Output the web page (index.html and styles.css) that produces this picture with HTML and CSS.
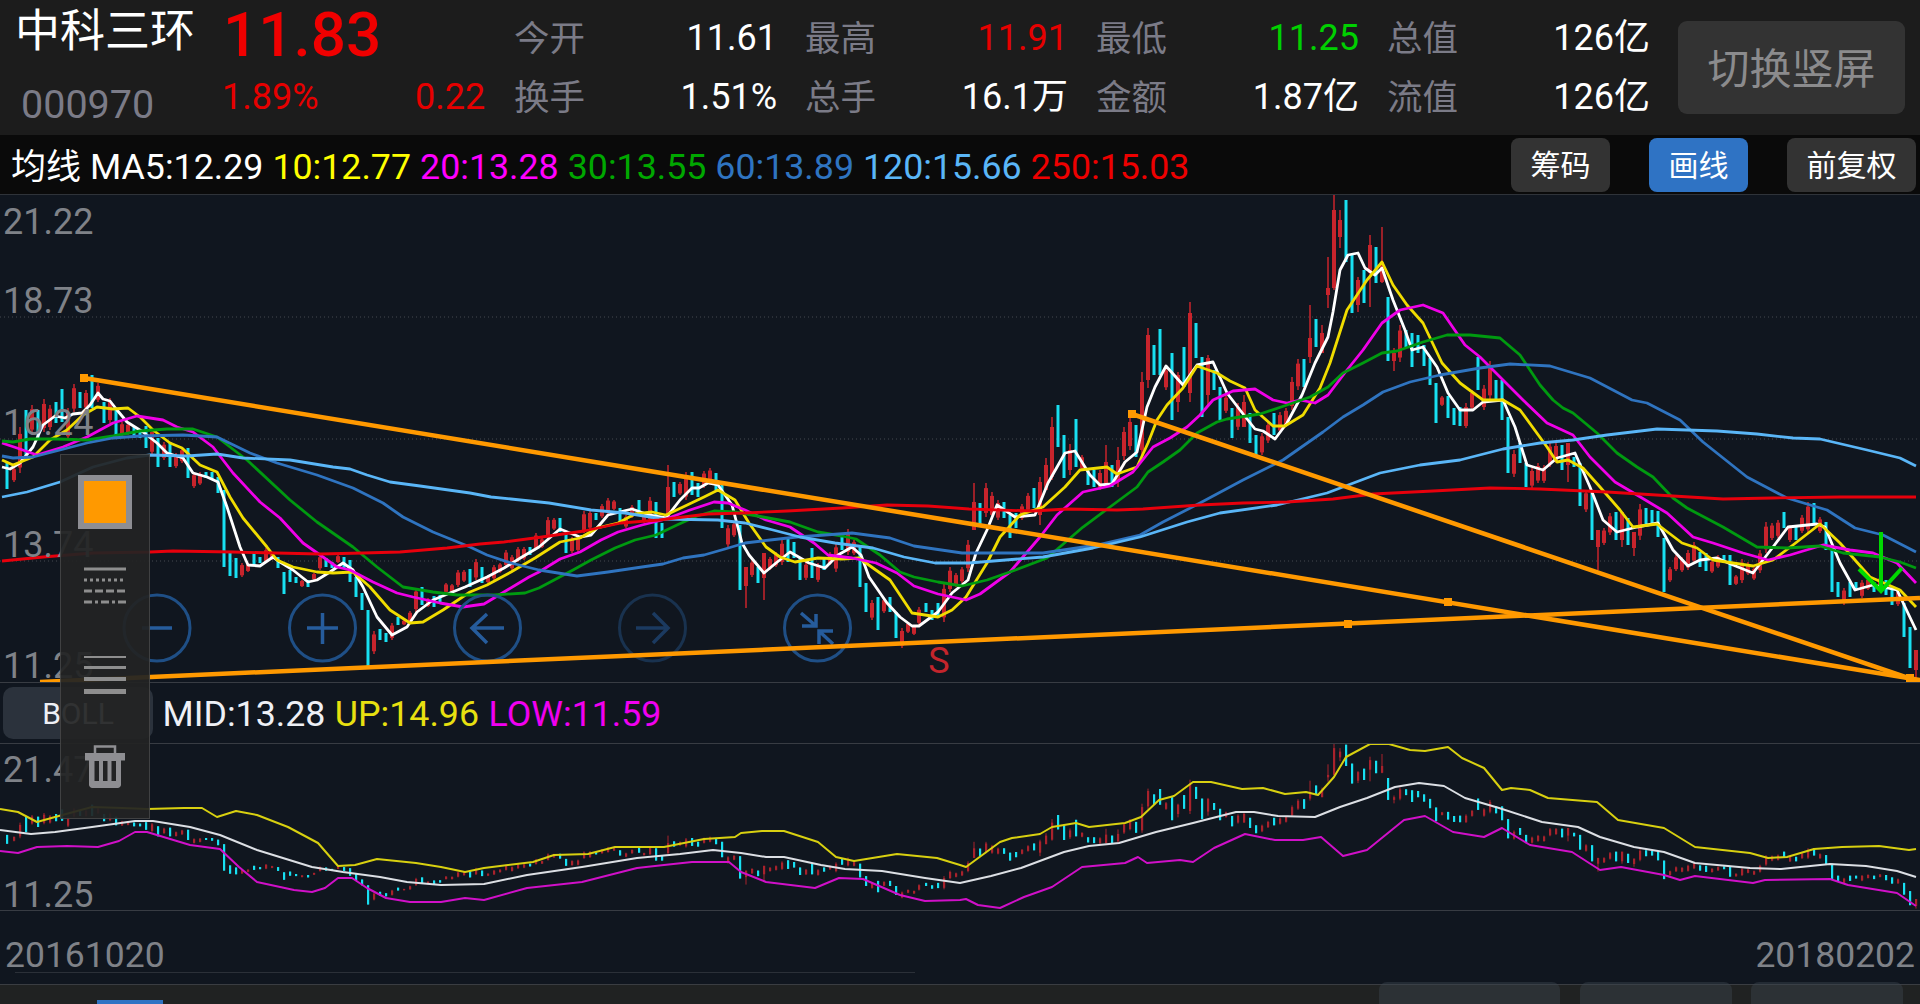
FILE: index.html
```html
<!DOCTYPE html>
<html lang="zh">
<head>
<meta charset="utf-8">
<title>中科三环 000970</title>
<link rel="stylesheet" href="styles.css">
</head>
<body>
<div class="app">
  <header class="quote">
    <div class="ident">
      <div class="ident-top">
        <span class="name">中科三环</span>
        <span class="price">11.83</span>
      </div>
      <div class="ident-bottom">
        <span class="code">000970</span>
        <span class="pct up">1.89%</span>
        <span class="chg up">0.22</span>
      </div>
    </div>
    <div class="stats">
      <div class="stat"><span class="lab">今开</span><span class="val">11.61</span></div>
      <div class="stat"><span class="lab">最高</span><span class="val up">11.91</span></div>
      <div class="stat"><span class="lab">最低</span><span class="val down">11.25</span></div>
      <div class="stat"><span class="lab">总值</span><span class="val">126亿</span></div>
      <div class="stat"><span class="lab">换手</span><span class="val">1.51%</span></div>
      <div class="stat"><span class="lab">总手</span><span class="val">16.1万</span></div>
      <div class="stat"><span class="lab">金额</span><span class="val">1.87亿</span></div>
      <div class="stat"><span class="lab">流值</span><span class="val">126亿</span></div>
    </div>
    <button class="switch">切换竖屏</button>
  </header>

  <div class="ma-row">
    <span class="ma-title">均线</span>
    <span class="ma c-white">MA5:12.29</span>
    <span class="ma c-yellow">10:12.77</span>
    <span class="ma c-magenta">20:13.28</span>
    <span class="ma c-green">30:13.55</span>
    <span class="ma c-blue">60:13.89</span>
    <span class="ma c-sky">120:15.66</span>
    <span class="ma c-red">250:15.03</span>
    <div class="ma-actions">
      <button class="chip chip-a">筹码</button>
      <button class="chip chip-b is-on">画线</button>
      <button class="chip chip-c">前复权</button>
    </div>
  </div>

  <svg class="chart chart-main" viewBox="0 195 1920 487" width="1920" height="487">
    <defs><clipPath id="mainClip"><rect x="0" y="195" width="1920" height="487"/></clipPath></defs>
    <g class="grid">
      <line x1="0" y1="317" x2="1920" y2="317"/>
      <line x1="0" y1="439" x2="1920" y2="439"/>
      <line x1="0" y1="561" x2="1920" y2="561"/>
    </g>
    <g id="mainCandles"></g>
    <g id="mainLines"></g>
    <g class="axis">
      <text x="3" y="234">21.22</text>
      <text x="3" y="313">18.73</text>
      <text x="3" y="435">16.24</text>
      <text x="3" y="557">13.74</text>
      <text x="3" y="678">11.25</text>
    </g>
    <g class="zoom">
      <circle cx="157" cy="628" r="33"/><path d="M142 628H172"/>
      <circle cx="322.500" cy="628" r="33"/><path d="M307 628H338M322.500 613V644"/>
      <circle cx="487.500" cy="628" r="33"/><path d="M472 628H504M487 614L472 628L487 643"/>
      <g class="zoom-off"><circle cx="652.500" cy="628" r="33"/><path d="M636 628H668M653 613L668 628L653 643"/></g>
      <circle cx="817.500" cy="628" r="33"/><path d="M801 613L816 626M802 626H816V614M833 644L819 631M833 631H819V644"/>
    </g>
    <text class="mark-s" x="939" y="673">S</text>
    <g class="draw" clip-path="url(#mainClip)">
      <line x1="84" y1="378" x2="1920" y2="680"/>
      <line x1="1132" y1="414" x2="1920" y2="682"/>
      <line x1="40" y1="682" x2="1920" y2="598"/>
      <rect x="80" y="374" width="8" height="8"/>
      <rect x="1128" y="410" width="8" height="8"/>
      <rect x="1444" y="598" width="8" height="8"/>
      <rect x="1344" y="620" width="8" height="8"/>
      <rect x="1906" y="674" width="8" height="8"/>
    </g>
    <path class="sell" d="M1881 532V591M1859 569L1881 591L1902 568"/>
  </svg>

  <div class="boll-row">
    <button class="boll">BOLL</button>
    <span class="ma c-mid">MID:13.28</span>
    <span class="ma c-up">UP:14.96</span>
    <span class="ma c-low">LOW:11.59</span>
  </div>

  <svg class="chart chart-sub" viewBox="0 744 1920 166" width="1920" height="166">
    <g id="subCandles"></g>
    <g id="subLines"></g>
    <g class="axis">
      <text x="3" y="782">21.47</text>
      <text x="3" y="907">11.25</text>
    </g>
  </svg>

  <div class="dates"><span>20161020</span><span>20180202</span></div>
  <div class="rule"></div>

  <footer class="footer">
    <span class="footer-tab"></span>
    <div class="peek">
      <span class="peek-tab peek-a"></span>
      <span class="peek-tab peek-b"></span>
      <span class="peek-tab peek-c"></span>
    </div>
  </footer>

  <aside class="tools">
    <span class="swatch"></span>
    <svg class="tool-styles" width="42" height="37" viewBox="0 0 42 37">
      <path class="t1" d="M0 2H42"/>
      <path class="t2" d="M0 13H42"/>
      <path class="t3" d="M0 24H42"/>
      <path class="t4" d="M0 35H42"/>
    </svg>
    <svg class="tool-widths" width="42" height="40" viewBox="0 0 42 40">
      <rect y="1" width="42" height="2"/>
      <rect y="11" width="42" height="3"/>
      <rect y="22" width="42" height="4"/>
      <rect y="34" width="42" height="5"/>
    </svg>
    <svg class="tool-trash" width="40" height="43" viewBox="0 0 40 43">
      <path class="trash-handle" d="M10 8V1.500H30V8"/>
      <rect class="trash-body" x="0" y="8" width="40" height="7.500"/>
      <path class="trash-body" d="M4 15H36V39A3.500 3.500 0 0 1 32.500 43H7.500A3.500 3.500 0 0 1 4 39Z"/>
      <rect class="trash-slot" x="9.500" y="16" width="4.500" height="20"/>
      <rect class="trash-slot" x="18" y="16" width="4.500" height="20"/>
      <rect class="trash-slot" x="26.500" y="16" width="4.500" height="20"/>
    </svg>
  </aside>
</div>
<script src="chart.js"></script>
</body>
</html>
```

FILE: styles.css
```css
* { box-sizing: border-box; }
html, body { margin: 0; padding: 0; background: #10161f; }
body { font-family: Roboto, "Noto Sans CJK SC", sans-serif; color: #fff; }
button { font: inherit; border: 0; padding: 0; margin: 0; }

.app { position: relative; width: 1920px; height: 1004px; overflow: hidden; background: #10161f; }

.up { color: #e60000; }
.down { color: #00d000; }

/* quote header */
.quote { display: flex; height: 135px; background: #1c1c1c; }
.ident { width: 514px; flex: none; }
.ident-top { display: flex; align-items: center; height: 67px; padding-left: 15px; }
.name { width: 208px; font-size: 45px; line-height: 60px; margin-top: -4px; }
.price { font-size: 62px; font-weight: 500; line-height: 64px; color: #f00000; margin-top: 2px; }
.ident-bottom { display: flex; align-items: center; height: 60px; padding-left: 21px; }
.code { width: 201px; font-size: 39.500px; color: #7b7b87; margin-top: 14px; }
.pct { width: 193px; font-size: 36px; }
.chg { width: 69px; font-size: 36px; text-align: right; }

.stats { display: grid; grid-template-columns: repeat(4, 291px); grid-auto-rows: 59px; padding-top: 8px; flex: none; }
.stat { display: flex; justify-content: space-between; align-items: center; padding-right: 28px; }
.lab { font-size: 35.500px; color: #7b7b87; margin-top: -4px; }
.val { font-size: 36px; line-height: 40px; }
.val:not(.up):not(.down) { color: #fff; }

.switch { width: 227px; height: 93px; margin-top: 21px; padding-bottom: 4px; flex: none; border-radius: 9px; background: #333; color: #8b8b8d; font-size: 42px; }

/* MA row */
.ma-row { display: flex; align-items: center; gap: 9px; height: 60px; padding: 0 4px 0 11px; background: #0a0a0a; border-bottom: 1px solid #2f3339; }
.ma-title { font-size: 35px; margin-top: -3px; color: #fff; white-space: nowrap; }
.ma { font-size: 35.750px; margin-top: 4px; white-space: nowrap; }
.c-white { color: #fff; }
.c-yellow { color: #ffff00; }
.c-magenta { color: #ff00ff; }
.c-green { color: #00a800; }
.c-blue { color: #2f74c0; }
.c-sky { color: #5ab6f7; }
.c-red { color: #ee0000; }
.c-mid { color: #eef0f6; }
.c-up { color: #e8e010; }
.c-low { color: #f000f0; }

.ma-actions { display: flex; gap: 39px; margin-left: auto; }
.chip { height: 54px; padding-bottom: 4px; border-radius: 8px; background: #333; color: #fff; font-size: 30px; }
.chip-a, .chip-b { width: 99px; }
.chip-c { width: 129px; }
.chip.is-on { background: #2f73c4; }

/* charts */
.chart { display: block; box-sizing: content-box; background: #10161f; border-bottom: 1px solid #383c43; }
.grid line { stroke: rgba(255,255,255,.22); stroke-width: 1; stroke-dasharray: 1 3; }
.axis text { font-size: 36px; fill: #7f8288; }
.zoom circle { fill: none; stroke: #1f4f86; stroke-width: 3; }
.zoom path { fill: none; stroke: #265c9c; stroke-width: 3.500; }
.zoom-off circle { stroke: #19324f; }
.zoom-off path { stroke: #1b3a60; }
.mark-s { font-size: 36px; fill: #c4252c; text-anchor: middle; }
.draw line { stroke: #ff9900; stroke-width: 4.500; }
.draw rect { fill: #ff9900; }
.sell { fill: none; stroke: #00d800; stroke-width: 4; }
.ma-line { fill: none; stroke-width: 2.800; stroke-linejoin: round; }
.sub-line { fill: none; stroke-width: 2; stroke-linejoin: round; }
.wick-r { stroke: #c8242c; stroke-width: 1.500; }
.wick-c { stroke: #18e0f2; stroke-width: 1.500; }
.body-r { fill: #c8242c; }
.body-c { fill: #18e0f2; }
.sub-wick-r { stroke: #a8222c; stroke-width: 1; }
.sub-wick-c { stroke: #18e0f2; stroke-width: 1; }
.sub-body-r { fill: #a8222c; }
.sub-body-c { fill: #18e0f2; }

.boll-row { display: flex; align-items: center; gap: 9.500px; height: 61px; padding-left: 3px; background: #10161f; border-bottom: 1px solid #383c43; }
.boll-row .ma { margin-top: 2px; }
.boll { width: 150px; height: 52px; border-radius: 10px; background: #2b323c; color: #eef0f6; font-size: 30px; }

.dates { display: flex; justify-content: space-between; align-items: flex-end; height: 61px; padding: 0 5px; font-size: 35.500px; line-height: 40px; color: #7f8288; }
.dates span { margin-bottom: -3px; }
.rule { width: 900px; height: 1px; margin: 0 0 11px 15px; background: #2b3038; }

.footer { position: relative; display: flex; height: 20px; padding: 15px 0 0 97px; background: #202222; border-top: 1px solid #3a3d42; }
.footer-tab { width: 66px; height: 5px; background: #2f73c4; }
.peek { position: absolute; left: 1379px; top: -3px; display: flex; gap: 20px; height: 23px; }
.peek-tab { height: 23px; border-radius: 8px 8px 0 0; background: rgba(60,68,78,.45); }
.peek-a { width: 181px; }
.peek-b { width: 152px; margin-right: -1px; }
.peek-c { width: 152px; }

/* drawing tool palette */
.tools { position: absolute; left: 60px; top: 454px; width: 90px; height: 365px; display: flex; flex-direction: column; align-items: center; padding-top: 20px; background: rgba(34,35,36,.93); border: 1px solid rgba(255,255,255,.14); }
.swatch { width: 54px; height: 54px; border: 6px solid #8e8e93; background: #ff9900; flex: none; }
.tool-styles { margin-top: 38px; flex: none; }
.tool-widths { margin-top: 51px; flex: none; }
.tool-trash { margin-top: 50px; flex: none; }
.tool-styles path { fill: none; stroke: #8e8e8e; stroke-width: 3; }
.tool-styles .t2 { stroke-dasharray: 3 3; }
.tool-styles .t3 { stroke-dasharray: 8 3; }
.tool-styles .t4 { stroke-dasharray: 8 3 3 3; }
.tool-widths rect { fill: #8e8e8e; }
.trash-body { fill: #8e8e92; }
.trash-handle { fill: none; stroke: #8e8e92; stroke-width: 2.500; }
.trash-slot { fill: #222324; }
```

FILE: chart.js
```js
(function () {
  var NS = 'http://www.w3.org/2000/svg';

  var MA = {
    '#ffffff': [[2,467],[10,469],[20,463],[33,447],[43,425],[55,416],[65,418],[73,414],[82,413],[90,405],[98,393],[103,399],[110,401],[117,410],[127,422],[143,432],[157,443],[167,453],[183,458],[193,473],[207,477],[218,482],[227,507],[240,547],[248,565],[260,566],[273,557],[280,562],[293,570],[308,582],[317,580],[330,572],[343,563],[353,570],[363,587],[377,617],[392,635],[407,627],[417,612],[433,600],[450,593],[465,587],[487,577],[504,568],[522,557],[539,547],[560,529],[580,537],[591,535],[608,515],[632,509],[649,515],[666,518],[680,500],[692,488],[699,488],[708,483],[718,485],[732,505],[742,543],[749,555],[764,573],[776,563],[790,552],[809,563],[825,568],[838,555],[852,547],[861,555],[869,577],[887,603],[900,617],[912,626],[919,626],[938,612],[952,593],[968,580],[976,553],[987,530],[997,505],[1015,517],[1035,515],[1048,483],[1065,453],[1075,451],[1090,475],[1100,485],[1112,484],[1125,462],[1137,452],[1147,407],[1155,387],[1166,366],[1183,385],[1197,365],[1213,362],[1227,393],[1240,410],[1255,429],[1263,431],[1275,439],[1287,423],[1302,395],[1315,363],[1328,337],[1333,312],[1340,270],[1348,255],[1358,253],[1365,268],[1375,275],[1382,268],[1393,300],[1405,330],[1412,350],[1423,347],[1437,367],[1448,393],[1460,410],[1473,410],[1483,402],[1503,400],[1515,427],[1527,465],[1543,470],[1557,458],[1575,453],[1590,487],[1603,520],[1617,532],[1637,527],[1658,523],[1673,550],[1688,566],[1700,560],[1717,558],[1733,565],[1753,573],[1773,547],[1788,527],[1817,524],[1825,527],[1840,563],[1855,590],[1873,585],[1897,590],[1916,630]],
    '#f0dc00': [[2,460],[13,465],[33,457],[50,440],[67,430],[83,415],[97,407],[113,409],[128,408],[140,417],[153,430],[170,443],[182,448],[200,465],[217,472],[230,497],[243,518],[267,547],[277,560],[293,567],[317,572],[333,573],[353,572],[370,587],[390,610],[410,623],[423,622],[443,610],[470,592],[487,585],[511,572],[535,558],[560,542],[580,538],[597,528],[618,523],[635,514],[652,512],[666,515],[683,507],[704,497],[718,490],[735,500],[749,523],[766,547],[780,557],[795,562],[818,558],[842,559],[859,558],[873,568],[890,580],[912,613],[938,617],[952,610],[966,597],[987,563],[1000,537],[1020,515],[1043,507],[1065,487],[1080,470],[1107,467],[1117,474],[1137,467],[1148,443],[1157,420],[1167,405],[1183,388],[1197,366],[1217,373],[1230,381],[1245,388],[1255,410],[1273,426],[1285,426],[1303,415],[1320,388],[1330,363],[1347,310],[1367,280],[1382,262],[1393,285],[1407,305],[1423,323],[1442,363],[1460,383],[1483,400],[1503,400],[1520,410],[1547,447],[1557,462],[1568,460],[1583,468],[1600,487],[1620,510],[1633,527],[1657,524],[1682,543],[1697,548],[1713,560],[1733,563],[1753,566],[1773,560],[1793,545],[1820,524],[1840,543],[1870,577],[1900,590],[1916,607]],
    '#f000e8': [[2,443],[17,448],[37,455],[63,447],[87,437],[113,423],[137,416],[163,420],[177,427],[193,432],[213,447],[233,473],[260,502],[280,518],[303,543],[323,557],[337,567],[350,570],[373,582],[397,593],[413,597],[440,603],[463,607],[484,604],[504,592],[529,577],[539,572],[560,559],[580,552],[601,540],[618,532],[642,525],[666,519],[690,510],[714,502],[728,503],[745,510],[766,520],[790,527],[814,543],[828,555],[852,558],[876,563],[897,573],[914,586],[938,594],[966,600],[980,594],[1010,572],[1022,558],[1040,537],[1057,515],[1083,492],[1110,486],[1133,472],[1153,447],[1170,438],[1187,427],[1200,415],[1213,400],[1233,391],[1255,389],[1273,400],[1287,403],[1300,400],[1315,403],[1328,395],[1347,370],[1363,350],[1382,323],[1400,310],[1423,305],[1443,313],[1465,345],[1480,357],[1523,400],[1547,423],[1573,435],[1590,457],[1615,482],[1637,495],[1667,513],[1693,537],[1713,543],[1743,553],[1768,560],[1790,555],[1823,545],[1850,550],[1873,553],[1897,563],[1916,583]],
    '#009a10': [[2,441],[13,442],[30,439],[57,439],[87,440],[113,436],[140,431],[167,429],[193,429],[217,437],[247,460],[290,500],[317,522],[353,547],[377,567],[403,587],[433,592],[457,595],[494,595],[525,593],[539,588],[573,570],[591,560],[615,548],[635,540],[656,535],[677,525],[697,516],[714,511],[735,512],[763,517],[790,522],[818,532],[842,536],[856,539],[880,555],[900,572],[914,577],[938,582],[962,586],[987,580],[1010,572],[1047,558],[1083,527],[1110,507],[1137,487],[1148,472],[1163,462],[1180,450],[1197,433],[1217,422],[1227,419],[1240,417],[1260,414],[1287,405],[1310,397],[1328,387],[1343,373],[1363,363],[1382,353],[1397,351],[1423,342],[1447,335],[1470,335],[1500,338],[1520,355],[1540,385],[1553,400],[1563,408],[1573,413],[1597,433],[1617,453],[1637,467],[1653,477],[1673,498],[1687,508],[1723,527],[1757,547],[1787,548],[1820,546],[1843,553],[1880,557],[1900,562],[1916,568]],
    '#2f74c0': [[2,456],[13,458],[33,457],[60,450],[87,443],[113,438],[140,436],[183,435],[217,437],[250,453],[277,463],[317,475],[353,488],[383,503],[403,517],[433,532],[470,547],[487,555],[511,563],[539,570],[577,576],[608,572],[642,567],[663,564],[683,558],[704,555],[725,549],[745,543],[770,540],[797,537],[825,535],[852,533],[890,538],[914,546],[962,553],[1043,553],[1097,545],[1140,535],[1163,522],[1200,503],[1243,480],[1283,460],[1323,432],[1343,417],[1363,405],[1383,392],[1410,382],[1440,375],[1480,368],[1510,364],[1550,366],[1590,378],[1632,400],[1647,403],[1680,420],[1703,442],[1747,477],[1787,498],[1827,510],[1855,528],[1883,535],[1916,552]],
    '#5ab6f7': [[2,497],[27,492],[60,482],[93,467],[127,458],[150,455],[187,456],[217,454],[243,458],[290,460],[333,467],[350,469],[367,475],[390,482],[420,486],[470,493],[491,497],[511,499],[549,503],[591,510],[625,513],[663,519],[718,520],[745,523],[773,530],[800,537],[835,543],[873,548],[904,557],[935,563],[969,563],[1043,557],[1093,548],[1140,537],[1187,522],[1220,513],[1277,505],[1327,493],[1380,473],[1420,465],[1460,460],[1503,449],[1540,443],[1573,440],[1607,435],[1657,429],[1717,431],[1757,434],[1793,438],[1820,439],[1867,450],[1900,458],[1916,466]],
    '#e8000c': [[2,561],[43,557],[93,553],[150,552],[173,551],[233,552],[320,554],[363,553],[400,552],[447,548],[480,544],[504,542],[542,537],[584,531],[621,523],[659,520],[708,514],[745,513],[787,511],[842,508],[887,505],[928,506],[969,509],[1033,511],[1067,509],[1117,510],[1143,509],[1200,505],[1243,503],[1287,502],[1333,499],[1373,494],[1433,491],[1490,488],[1540,489],[1607,492],[1673,496],[1723,499],[1773,498],[1840,497],[1916,497]]
  };

  var BOLL = {
    '#dcdfe4': [[0,830],[31,834],[55,832],[92,827],[135,821],[153,821],[190,827],[220,835],[257,850],[312,867],[343,872],[380,877],[407,882],[441,885],[484,884],[527,875],[582,867],[637,858],[680,854],[713,850],[741,853],[766,857],[784,857],[821,865],[845,869],[882,871],[925,878],[960,883],[991,876],[1021,868],[1064,852],[1089,846],[1119,843],[1156,832],[1193,823],[1236,812],[1254,812],[1278,816],[1315,817],[1340,807],[1367,798],[1395,787],[1419,783],[1444,786],[1465,798],[1499,808],[1542,822],[1578,827],[1600,837],[1634,847],[1664,852],[1695,863],[1750,868],[1781,869],[1830,864],[1866,866],[1897,871],[1916,877]],
    '#d8d010': [[0,809],[18,812],[37,822],[55,817],[92,807],[122,808],[147,809],[184,808],[202,808],[217,817],[236,811],[257,815],[288,827],[318,843],[338,866],[355,865],[377,859],[416,863],[441,867],[465,872],[484,868],[533,862],[554,855],[588,854],[615,847],[664,847],[704,839],[735,837],[741,833],[762,831],[784,831],[818,842],[836,857],[854,861],[897,854],[937,858],[960,865],[966,867],[1000,842],[1012,838],[1040,834],[1052,827],[1076,823],[1089,827],[1125,823],[1141,817],[1159,800],[1174,796],[1193,782],[1211,782],[1242,789],[1263,788],[1285,794],[1306,792],[1318,795],[1334,777],[1346,757],[1370,744],[1389,744],[1410,750],[1425,751],[1448,747],[1462,758],[1484,768],[1502,790],[1511,788],[1530,790],[1548,798],[1597,802],[1618,820],[1664,828],[1695,847],[1750,853],[1768,858],[1787,857],[1814,849],[1842,847],[1879,846],[1909,850],[1916,849]],
    '#d010c8': [[0,851],[18,853],[37,847],[67,846],[98,847],[119,841],[135,832],[147,832],[190,845],[220,849],[239,867],[257,882],[294,890],[312,892],[325,888],[338,878],[352,878],[367,888],[386,898],[410,902],[441,902],[465,898],[484,900],[527,888],[582,882],[637,868],[664,865],[692,862],[729,862],[741,872],[766,882],[815,888],[839,878],[863,879],[900,895],[925,901],[960,900],[966,899],[978,905],[1000,908],[1024,897],[1052,887],[1082,867],[1125,863],[1138,857],[1147,863],[1180,860],[1193,862],[1214,848],[1245,834],[1275,840],[1303,840],[1321,837],[1343,856],[1367,850],[1404,820],[1425,816],[1453,832],[1484,837],[1502,828],[1530,845],[1572,852],[1600,870],[1621,867],[1664,875],[1680,880],[1695,876],[1753,883],[1765,880],[1830,879],[1848,885],[1897,893],[1916,906]]
  };

  /* candles: x, high, low, colour, optional body top and bottom */
  var CANDLES = [
    [7,463,489,'c'],[14,467,482,'r'],[20,427,473,'r'],[26,410,455,'c'],[32,405,433,'r'],[38,410,440,'c'],[44,399,432,'r'],[50,405,430,'r'],[56,402,423,'c'],[62,389,422,'c'],[68,408,440,'r'],[74,384,412,'r'],[80,392,408,'c'],[86,390,410,'r'],[92,375,408,'c'],[98,383,402,'r'],[104,402,423,'c'],[110,398,423,'r'],[116,410,435,'c'],[122,422,437,'r'],[128,423,435,'r'],[134,427,438,'c'],[140,430,438,'c'],[146,426,448,'c'],[152,428,455,'r'],[158,438,467,'c'],[164,442,460,'r'],[170,442,467,'c'],[176,453,468,'r'],[182,448,463,'r'],[188,448,478,'c'],[194,473,488,'r'],[200,472,485,'r'],[206,472,478,'c'],[212,472,480,'c'],[218,477,493,'c'],[224,490,567,'c'],[230,552,576,'c'],[236,558,578,'c'],[242,563,577,'r'],[248,563,572,'r'],[254,553,565,'c'],[260,557,563,'c'],[266,548,563,'r'],[272,553,560,'r'],[278,557,568,'c'],[284,572,594,'c'],[290,570,582,'c'],[296,577,583,'c'],[302,580,587,'r'],[308,580,587,'c'],[314,573,580,'r'],[320,555,570,'r'],[326,558,567,'c'],[332,562,568,'c'],[338,555,563,'r'],[344,557,568,'c'],[350,560,582,'c'],[356,577,597,'c'],[362,593,610,'c'],[368,610,666,'c'],[374,631,654,'r'],[380,629,640,'c'],[386,633,642,'c'],[392,623,640,'r'],[398,617,625,'c'],[404,620,625,'r'],[410,611,623,'r'],[416,588,612,'r'],[422,587,605,'c'],[428,598,607,'r'],[434,596,607,'c'],[440,595,602,'c'],[446,583,593,'r'],[452,584,593,'r'],[458,570,587,'r'],[464,570,582,'r'],[470,569,587,'c'],[476,559,580,'r'],[482,567,583,'c'],[488,575,583,'r'],[494,565,580,'r'],[500,563,573,'r'],[506,550,567,'r'],[512,555,570,'r'],[518,547,562,'r'],[524,547,560,'r'],[530,547,555,'c'],[536,533,550,'r'],[542,538,548,'r'],[548,517,538,'r'],[554,518,530,'r'],[560,518,532,'c'],[566,533,553,'c'],[572,537,553,'r'],[578,535,552,'r'],[584,511,533,'r'],[590,510,530,'r'],[596,513,520,'c'],[602,504,518,'r'],[608,498,515,'r'],[614,500,510,'r'],[620,508,523,'c'],[626,515,528,'r'],[632,505,518,'r'],[639,500,515,'c'],[644,515,523,'r'],[650,497,522,'r'],[656,502,538,'c'],[662,523,538,'c'],[668,465,517,'r',487,517],[674,482,497,'c'],[680,482,495,'r'],[686,472,500,'r'],[692,472,495,'c'],[698,483,497,'c'],[704,471,488,'r'],[710,468,485,'r'],[716,473,490,'c'],[722,483,528,'c'],[728,525,547,'r'],[734,522,537,'r'],[740,525,590,'c'],[746,567,608,'r',567,586],[752,560,577,'r'],[758,567,583,'c'],[764,553,600,'r',553,578],[770,557,570,'r'],[776,552,567,'r'],[782,540,565,'r'],[788,537,562,'c'],[794,542,558,'c'],[800,558,580,'c'],[806,562,580,'r'],[812,548,578,'c'],[818,563,582,'r'],[824,558,570,'c'],[830,552,565,'r'],[836,543,572,'r'],[842,533,550,'c'],[848,529,555,'r'],[854,540,555,'r'],[860,547,587,'c'],[866,583,612,'c'],[872,600,620,'r'],[878,597,630,'c'],[884,598,613,'r'],[890,597,612,'c'],[896,612,638,'c'],[902,628,648,'r'],[908,622,633,'r'],[914,625,635,'r'],[919,607,625,'r'],[926,603,612,'c'],[932,610,620,'c'],[938,603,618,'c'],[944,583,622,'r'],[950,567,592,'r'],[956,573,587,'r'],[962,567,583,'r'],[968,540,572,'r'],[974,483,530,'r',502,530],[980,503,525,'c'],[986,483,517,'r'],[992,492,518,'r'],[998,500,520,'r'],[1004,502,518,'c'],[1010,515,538,'c'],[1016,513,528,'c'],[1022,504,520,'r'],[1028,493,512,'r'],[1034,488,508,'c'],[1040,477,525,'r',482,515],[1046,458,490,'r',465,490],[1052,417,480,'r',427,477],[1058,405,447,'c'],[1064,435,478,'c'],[1070,444,475,'r',450,470],[1076,419,467,'c'],[1082,455,470,'r'],[1088,470,485,'c'],[1094,470,487,'c'],[1100,470,490,'r'],[1106,445,487,'r',462,487],[1112,465,487,'c'],[1118,447,487,'r',460,482],[1124,427,460,'r'],[1130,417,450,'r'],[1136,425,457,'c'],[1142,372,457,'r',382,450],[1148,328,388,'r',335,380],[1154,345,375,'c'],[1160,329,375,'c'],[1166,367,390,'r'],[1172,353,420,'c'],[1178,372,412,'r',375,402],[1184,347,387,'c'],[1190,302,402,'r',313,393],[1196,323,358,'c'],[1202,357,417,'c'],[1208,355,407,'r',358,395],[1214,370,390,'c'],[1220,387,420,'c'],[1226,395,413,'r'],[1232,408,438,'c'],[1238,403,430,'r'],[1244,395,427,'r',402,427],[1250,413,443,'c'],[1256,435,458,'c'],[1262,433,455,'r'],[1268,422,443,'r'],[1274,413,435,'c'],[1280,412,433,'r'],[1286,408,427,'r'],[1292,377,410,'r'],[1298,359,390,'r'],[1304,359,387,'c'],[1310,305,363,'r',338,357],[1316,319,347,'c'],[1322,325,353,'r',333,353],[1328,257,308,'r',288,295],[1334,195,290,'r',210,288],[1340,210,248,'r',220,237],[1346,200,262,'c'],[1352,255,313,'c'],[1358,277,312,'r',280,305],[1364,270,303,'c'],[1370,235,307,'r',245,273],[1376,247,283,'c'],[1382,227,283,'r',262,282],[1388,297,361,'c'],[1394,348,371,'r',353,361],[1400,325,362,'r'],[1406,330,347,'c'],[1412,333,367,'c'],[1418,335,353,'c'],[1424,345,366,'c'],[1430,358,385,'c'],[1436,383,423,'c'],[1442,396,406,'r'],[1448,396,418,'c'],[1454,408,425,'c'],[1460,407,426,'c'],[1466,403,428,'r',407,426],[1472,390,410,'r'],[1478,357,390,'c'],[1484,385,410,'r'],[1490,361,400,'r'],[1496,380,400,'c'],[1502,380,420,'c'],[1508,417,473,'c'],[1514,450,477,'r'],[1520,443,463,'c'],[1526,463,487,'c'],[1532,468,488,'r'],[1538,463,483,'r'],[1544,465,483,'r'],[1550,443,467,'r'],[1556,443,463,'r'],[1562,445,470,'c'],[1568,443,482,'r',443,465],[1574,457,467,'c'],[1580,463,506,'c'],[1586,490,512,'r'],[1592,493,540,'c'],[1598,530,570,'r',530,547],[1604,528,545,'r'],[1610,513,535,'r'],[1616,512,540,'c'],[1622,512,547,'r',512,540],[1628,518,545,'c'],[1634,532,556,'r',532,548],[1640,504,540,'r'],[1646,508,525,'c'],[1652,510,523,'c'],[1658,511,537,'c'],[1664,538,592,'c'],[1670,567,582,'r'],[1676,555,571,'r'],[1682,557,572,'r'],[1688,550,570,'r'],[1694,542,563,'r'],[1700,552,567,'c'],[1706,553,571,'c'],[1712,560,573,'r'],[1718,555,568,'r'],[1724,555,563,'c'],[1730,555,585,'c'],[1736,575,585,'r'],[1742,559,583,'r'],[1748,562,575,'r'],[1754,567,580,'r'],[1760,550,573,'r'],[1766,522,553,'r'],[1772,523,540,'r'],[1778,520,538,'r'],[1784,512,528,'c'],[1790,525,542,'r'],[1796,527,540,'c'],[1802,515,533,'r'],[1808,502,533,'r'],[1814,503,523,'c'],[1820,517,533,'r'],[1826,522,550,'c'],[1832,547,592,'c'],[1838,582,597,'c'],[1844,588,605,'r'],[1850,582,597,'c'],[1856,582,590,'c'],[1862,580,598,'r'],[1868,578,590,'r'],[1874,582,592,'c'],[1880,577,587,'r'],[1886,580,595,'c'],[1892,587,605,'c'],[1898,590,606,'r'],[1904,603,637,'c'],[1910,627,668,'c'],[1916,650,678,'r',650,670]
  ];

  function el(parent, tag, attrs) {
    var n = document.createElementNS(NS, tag);
    for (var k in attrs) n.setAttribute(k, attrs[k]);
    parent.appendChild(n);
    return n;
  }

  function lines(id, table, cls) {
    var g = document.getElementById(id);
    Object.keys(table).forEach(function (color) {
      el(g, 'polyline', {
        'class': cls,
        stroke: color,
        points: table[color].map(function (p) { return p.join(','); }).join(' ')
      });
    });
  }

  var main = document.getElementById('mainCandles');
  var sub = document.getElementById('subCandles');
  function toSub(y) { return +(743 + (y - 195) * 167 / 487).toFixed(1); }

  CANDLES.forEach(function (c) {
    var x = c[0], hi = c[1], lo = c[2], col = c[3];
    var range = lo - hi;
    var top = c[4] !== undefined ? c[4] : (col === 'r' ? hi + range * 0.15 : hi);
    var bot = c[5] !== undefined ? c[5] : (col === 'r' ? lo - range * 0.12 : lo);
    el(main, 'line', { 'class': 'wick-' + col, x1: x, x2: x, y1: hi, y2: lo });
    el(main, 'rect', {
      'class': 'body-' + col,
      x: x - (col === 'r' ? 2 : 1.5),
      y: top,
      width: col === 'r' ? 4 : 3,
      height: Math.max(bot - top, 2).toFixed(1)
    });
    el(sub, 'line', { 'class': 'sub-wick-' + col, x1: x, x2: x, y1: toSub(hi), y2: toSub(lo) });
    el(sub, 'rect', {
      'class': 'sub-body-' + col,
      x: x - 1,
      y: toSub(top),
      width: 2.2,
      height: Math.max(toSub(bot) - toSub(top), 1).toFixed(1)
    });
  });

  lines('mainLines', MA, 'ma-line');
  lines('subLines', BOLL, 'sub-line');
})();
```
